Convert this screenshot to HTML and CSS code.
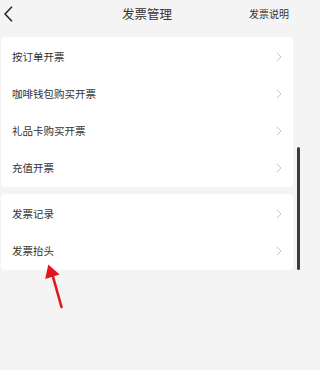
FILE: index.html
```html
<!DOCTYPE html>
<html lang="zh-CN">
<head>
<meta charset="utf-8">
<title>发票管理</title>
<link rel="stylesheet" href="styles.css">
</head>
<body>
<div class="page">
  <header class="topbar">
    <div class="back">
      <svg width="10" height="16" viewBox="0 0 10 16"><path d="M8.5 1.2 L2 8 L8.5 14.8" fill="none" stroke="#2a2a2a" stroke-width="1.6" stroke-linecap="round" stroke-linejoin="round"/></svg>
    </div>
    <div class="title">发票管理</div>
    <div class="help">发票说明</div>
  </header>

  <section class="card">
    <div class="row"><span>按订单开票</span><svg class="chev" width="6" height="10" viewBox="0 0 6 10"><path d="M1 1 L5 5 L1 9" fill="none" stroke="#c4c4c4" stroke-width="1"/></svg></div>
    <div class="row"><span>咖啡钱包购买开票</span><svg class="chev" width="6" height="10" viewBox="0 0 6 10"><path d="M1 1 L5 5 L1 9" fill="none" stroke="#c4c4c4" stroke-width="1"/></svg></div>
    <div class="row"><span>礼品卡购买开票</span><svg class="chev" width="6" height="10" viewBox="0 0 6 10"><path d="M1 1 L5 5 L1 9" fill="none" stroke="#c4c4c4" stroke-width="1"/></svg></div>
    <div class="row"><span>充值开票</span><svg class="chev" width="6" height="10" viewBox="0 0 6 10"><path d="M1 1 L5 5 L1 9" fill="none" stroke="#c4c4c4" stroke-width="1"/></svg></div>
  </section>

  <section class="card">
    <div class="row"><span>发票记录</span><svg class="chev" width="6" height="10" viewBox="0 0 6 10"><path d="M1 1 L5 5 L1 9" fill="none" stroke="#c4c4c4" stroke-width="1"/></svg></div>
    <div class="row"><span>发票抬头</span><svg class="chev" width="6" height="10" viewBox="0 0 6 10"><path d="M1 1 L5 5 L1 9" fill="none" stroke="#c4c4c4" stroke-width="1"/></svg></div>
  </section>

  <div class="scrollbar"></div>

  <svg class="pointer" width="300" height="370" viewBox="0 0 300 370">
    <line x1="61.5" y1="307" x2="52.5" y2="275" stroke="#e3161f" stroke-width="2.6" stroke-linecap="round"/>
    <polygon points="48.3,264.5 45.2,279 59.6,274.6" fill="#e3161f"/>
  </svg>
</div>
</body>
</html>
```
FILE: styles.css
```css
* { box-sizing: border-box; }
html, body {
  margin: 0;
  padding: 0;
  background: #f4f4f4;
}
body {
  font-family: "Noto Sans CJK SC", "Noto Sans", sans-serif;
  color: #333;
}
.page {
  position: relative;
  width: 300px;
  height: 370px;
  overflow: hidden;
  display: flex;
  flex-direction: column;
  gap: 7px;
}
.topbar {
  height: 30px;
  display: flex;
  align-items: center;
}
.back {
  width: 45px;
  padding-left: 3px;
  display: flex;
  align-items: center;
  margin-top: -2px;
}
.back svg { display: block; }
.title {
  flex: 1;
  text-align: center;
  font-size: 12.5px;
  color: #333;
  margin-top: -3px;
}
.help {
  width: 51px;
  padding-right: 11px;
  text-align: right;
  font-size: 10px;
  color: #333;
  margin-top: -3px;
}
.card {
  margin: 0 7px 0 1px;
  background: #fff;
  border-radius: 4px;
  padding: 1px 0;
}
.row {
  height: 37px;
  display: flex;
  align-items: center;
  justify-content: space-between;
  padding: 0 11px;
  font-size: 10.5px;
  color: #333;
}
.chev { display: block; }
.scrollbar {
  position: absolute;
  right: 0;
  top: 147px;
  width: 3.5px;
  height: 123px;
  background: #3c3c3c;
  border-radius: 2px;
}
.pointer {
  position: absolute;
  left: 0;
  top: 0;
  pointer-events: none;
}
```
